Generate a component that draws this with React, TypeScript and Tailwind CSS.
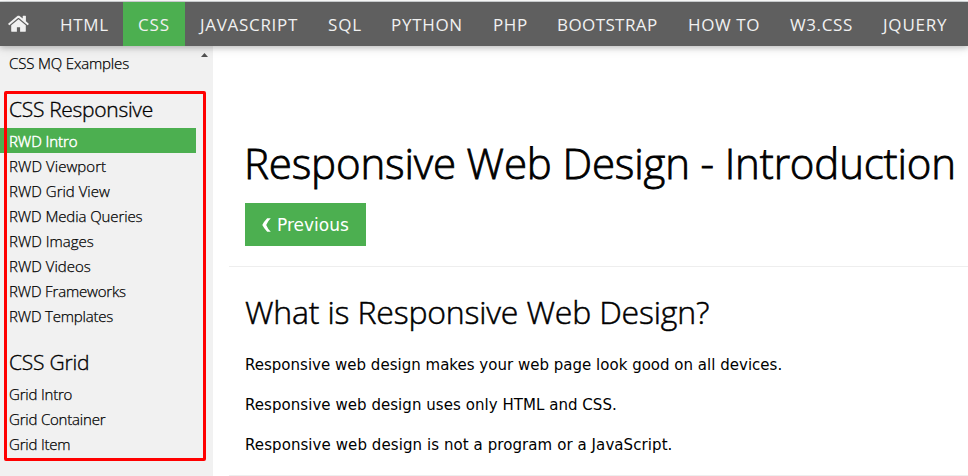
const NAV = [
  { label: 'HTML', cell: 'w-[78px] tracking-[0.7px]' },
  { label: 'CSS', cell: 'w-[62px] bg-[#4caf50] tracking-[0.8px]' },
  { label: 'JAVASCRIPT', cell: 'w-[128px] tracking-[0.7px]' },
  { label: 'SQL', cell: 'w-[63px] tracking-[0.9px]' },
  { label: 'PYTHON', cell: 'w-[102px] tracking-[0.7px]' },
  { label: 'PHP', cell: 'w-[64px] tracking-[0.6px]' },
  { label: 'BOOTSTRAP', cell: 'w-[131px] tracking-[0.4px]' },
  { label: 'HOW TO', cell: 'w-[102px] tracking-[0.6px]' },
  { label: 'W3.CSS', cell: 'w-[93px] tracking-[0.6px]' },
  { label: 'JQUERY', cell: 'w-[95px] tracking-[0.8px]' },
];

const RESPONSIVE = [
  { label: 'RWD Intro', style: 'bg-[#4caf50] text-white tracking-[-0.05px] [-webkit-text-stroke:0.5px]' },
  { label: 'RWD Viewport', style: 'tracking-[0.05px] [-webkit-text-stroke:0.25px]' },
  { label: 'RWD Grid View', style: 'tracking-[0px] [-webkit-text-stroke:0.25px]' },
  { label: 'RWD Media Queries', style: 'tracking-[-0.1px] [-webkit-text-stroke:0.25px]' },
  { label: 'RWD Images', style: 'tracking-[0px] [-webkit-text-stroke:0.25px]' },
  { label: 'RWD Videos', style: 'tracking-[0px] [-webkit-text-stroke:0.25px]' },
  { label: 'RWD Frameworks', style: 'tracking-[-0.17px] [-webkit-text-stroke:0.25px]' },
  { label: 'RWD Templates', style: 'tracking-[-0.2px] [-webkit-text-stroke:0.25px]' },
];

const GRID = [
  { label: 'Grid Intro', style: 'tracking-[-0.2px] [-webkit-text-stroke:0.25px]' },
  { label: 'Grid Container', style: 'tracking-[-0.2px] [-webkit-text-stroke:0.25px]' },
  { label: 'Grid Item', style: 'tracking-[-0.2px] [-webkit-text-stroke:0.25px]' },
];

function SideLink({ label, style }: { label: string; style: string }) {
  return (
    <a className={`block h-[25px] w-[196px] pl-[9px] text-[15px] leading-[27px] whitespace-nowrap ${style}`}>{label}</a>
  );
}

export default function App() {
  return (
    <div className="relative flex h-[476px] w-[968px] flex-col overflow-hidden bg-white font-['Open_Sans','Noto_Sans',sans-serif] text-black">
      <div className="h-[2px] shrink-0 border-b border-[#d5d8da] bg-white" />
      <nav className="relative z-10 flex h-11 shrink-0 items-stretch bg-[#5f5f5f] text-[17px] leading-[46px] text-[#f1f1f1] shadow-[0_2px_5px_rgba(0,0,0,0.16),0_2px_10px_rgba(0,0,0,0.12)]">
        <a className="w-[45px] shrink-0 pt-[13px] pl-2">
          <svg className="h-[18px] w-[21px]" viewBox="0 0 21 18" fill="currentColor">
            <path d="M10.5 4.3 3.2 10.3v5.6c0 .5.4.9.9.9h4.8v-4.6h3.2v4.6h4.8c.5 0 .9-.4.9-.9v-5.6Z" />
            <path d="M20.5 8.5 17.9 6.3V1.3c0-.3-.2-.5-.5-.5h-2.2c-.3 0-.5.2-.5.5v2.3l-2.8-2.4c-.8-.6-2-.6-2.8 0L.4 8.5c-.2.2-.3.5-.1.7l.7.8c.2.2.5.3.7.1l8.4-7c.2-.2.6-.2.8 0l8.4 7c.2.2.5.1.7-.1l.7-.8c.1-.2.1-.5-.2-.7Z" />
          </svg>
        </a>
        {NAV.map((n) => (
          <a key={n.label} className={`shrink-0 pl-[15px] whitespace-nowrap ${n.cell}`}>{n.label}</a>
        ))}
      </nav>

      <div className="flex min-h-0 flex-1">
        <aside className="w-[213px] shrink-0 bg-[#f1f1f1] pt-1 font-light">
          <SideLink label="CSS MQ Examples" style="tracking-[-0.16px] [-webkit-text-stroke:0.25px]" />
          <h2 className="mt-5 mb-[5px] h-7 pl-[9px] text-[21px] leading-[28px] tracking-[-0.3px] whitespace-nowrap [-webkit-text-stroke:0.35px]">CSS Responsive</h2>
          {RESPONSIVE.map((l) => (
            <SideLink key={l.label} {...l} />
          ))}
          <h2 className="mt-[20px] mb-[5px] h-7 pl-[9px] text-[21px] leading-[28px] tracking-[-0.2px] whitespace-nowrap [-webkit-text-stroke:0.35px]">CSS Grid</h2>
          {GRID.map((l) => (
            <SideLink key={l.label} {...l} />
          ))}
        </aside>

        <main className="min-w-0 flex-1 pl-4">
          <div className="pl-4">
            <h1 className="mt-[87px] -ml-px h-[60px] text-[42px] leading-[60px] font-light tracking-[-0.16px] whitespace-nowrap [-webkit-text-stroke:0.8px]">Responsive Web Design - Introduction</h1>
            <a className="mt-[10px] flex h-[43px] w-[121px] items-center bg-[#4caf50] pl-[17px] font-['DejaVu_Sans',sans-serif] text-[17px] text-white">
              <svg className="mr-[5px] h-[14px] w-[10px] shrink-0" viewBox="0 0 10 14" fill="currentColor">
                <path d="M5.2.3H8.8Q5.6 3.3 4.2 7Q5.6 10.7 8.8 13.7H5.2Q1.9 10.3.3 7Q1.9 3.7 5.2.3Z" />
              </svg>
              <span className="pt-0.5">Previous</span>
            </a>
          </div>
          <hr className="mt-5 border-t border-[#eeeeee]" />
          <div className="pl-4">
            <h2 className="mt-[21px] h-[48px] text-[32px] leading-[48px] font-light tracking-[-0.18px] whitespace-nowrap [-webkit-text-stroke:0.5px]">What is Responsive Web Design?</h2>
            <div className="mt-[18px] flex flex-col gap-[17px] font-['DejaVu_Sans',sans-serif] text-[15px] leading-[23px] whitespace-nowrap">
              <p className="tracking-[0.015px]">Responsive web design makes your web page look good on all devices.</p>
              <p className="tracking-[0.05px]">Responsive web design uses only HTML and CSS.</p>
              <p className="tracking-[0.08px]">Responsive web design is not a program or a JavaScript.</p>
            </div>
          </div>
          <hr className="mt-[18px] border-t border-[#eeeeee]" />
        </main>
      </div>

      <svg className="absolute top-[53px] left-[201px] h-1 w-[7px]" viewBox="0 0 7 4" fill="#505050">
        <path d="M3.5 0 7 4H0Z" />
      </svg>
      <div className="absolute top-[91px] left-[4px] h-[370px] w-[202px] rounded-[2px] border-[3px] border-[#ff0000]" />
    </div>
  );
}
